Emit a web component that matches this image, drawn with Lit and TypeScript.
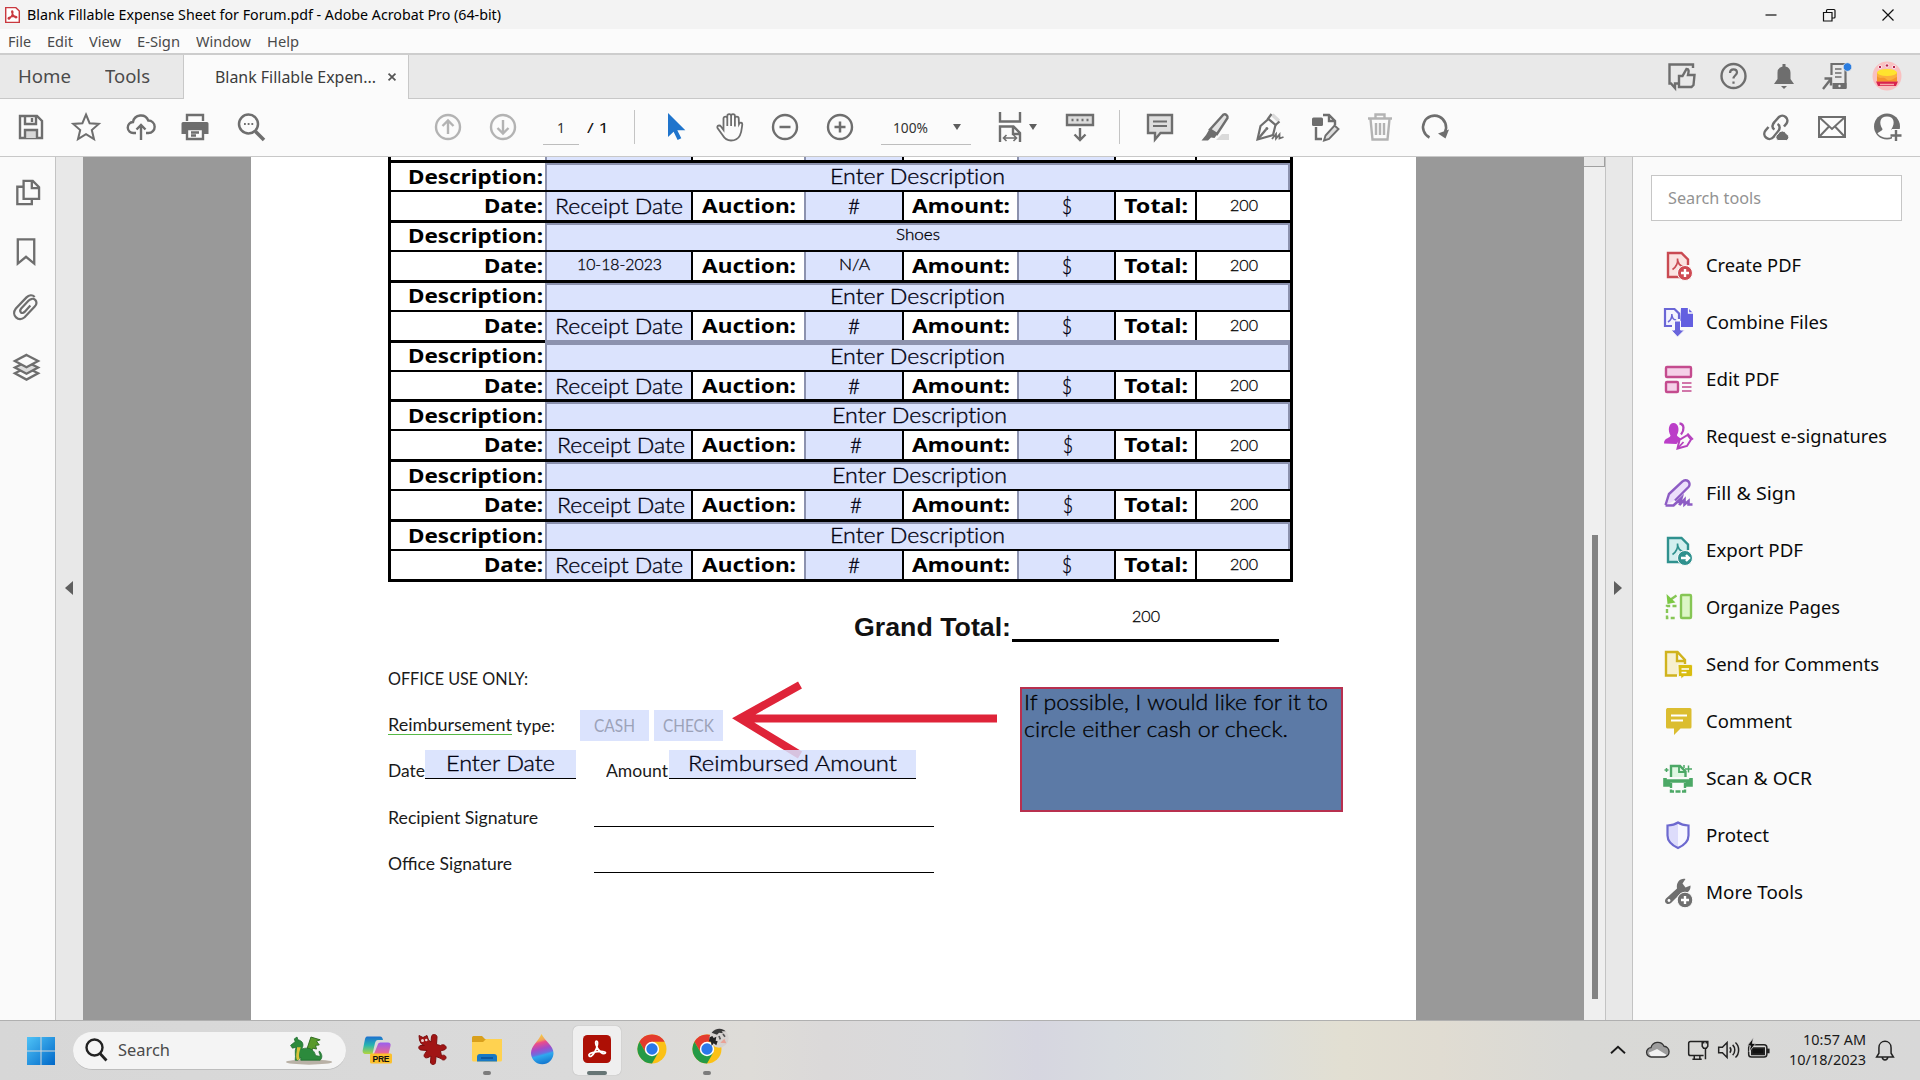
import { LitElement, html, css, svg, nothing } from "lit";
import { customElement, property, query } from "lit/decorators.js";

/** A single line of text condensed or expanded to a fixed measure. */
@customElement("fit-text")
class FitText extends LitElement {
  @property({ type: Number }) w = 0;
  @property() text = "";
  @query("span") span!: HTMLSpanElement;
  static styles = css`
    :host { display: inline-block; flex: none; white-space: nowrap; text-align: left; }
    span { display: inline-block; transform-origin: 0 50%; }
  `;
  render() {
    return html`<span>${this.text}</span>`;
  }
  updated() {
    const natural = this.span.offsetWidth;
    if (!natural) return;
    this.style.width = `${this.w}px`;
    this.span.style.transform = `scaleX(${this.w / this.span.getBoundingClientRect().width})`;
  }
}

const t = (text: string, w: number) => html`<fit-text .text=${text} .w=${w}></fit-text>`;

/* All icons are drawn on a 30 x 30 grid. */
const icons: Record<string, unknown> = {
  save: svg`<path d="M4 4h17l5 5v17H4z"/><path d="M9 4v8h11V4M16 6v4"/><path d="M9 26v-8h12v8" fill="#d8d8d8"/>`,
  star: svg`<path d="M15 2.500l3.600 8.700 9.200.700-7 6.100 2.200 9.200-8-5-8 5 2.200-9.200-7-6.100 9.200-.700z" stroke-width="2"/>`,
  cloudup: svg`<path d="M10 21H7.500a5.500 5.500 0 0 1-.500-11 8 8 0 0 1 15.300-1.500A6.200 6.200 0 0 1 22.500 21H20M15 28V13M10.500 17.500L15 13l4.500 4.500"/>`,
  print: svg`<g transform="translate(-1 0)"><path d="M7 9V3h16v6"/><path d="M3 10h24a1.500 1.500 0 0 1 1.500 1.500V22H24v-5H6v5H1.500V11.500A1.500 1.500 0 0 1 3 10z" fill="#6e6e6e" stroke="none"/><path d="M7 17h16v10H7zM11 20.500h8M11 23.500h5"/></g>`,
  find: svg`<circle cx="12.500" cy="12" r="9.500" stroke-width="2.500"/><path d="M19.500 19.500l8.500 8.500" stroke-width="3.500"/><path d="M8 12h1.800M11.700 12h1.800M15.400 12h1.800" stroke-width="2"/>`,
  up: svg`<circle cx="15" cy="15" r="12"/><path d="M15 22V8.500M9.500 14L15 8.500l5.500 5.500"/>`,
  down: svg`<circle cx="15" cy="15" r="12"/><path d="M15 8v13.500M9.500 16l5.500 5.500 5.500-5.500"/>`,
  cursor: svg`<path d="M8 1v24l5.600-5.200 4 8.200 3.700-1.800-4-8h8z" fill="#1f74cc" stroke="none"/>`,
  hand: svg`<g transform="translate(1 0)"><path d="M7.500 18V6.500a1.900 1.900 0 0 1 3.800 0V14 4a1.900 1.900 0 0 1 3.800 0v10V4a1.900 1.900 0 0 1 3.800 0v10.500V6.500a1.900 1.900 0 0 1 3.800 0L23 12c1-2 3.500-1.500 3.300.5C25.500 17 26 28.500 15 28.500c-4.500 0-6.500-2-8.500-5.500L1.500 16c-1-2.200 2-3.500 3.500-1.500z" stroke-width="1.800"/></g>`,
  minus: svg`<circle cx="15" cy="15" r="12"/><path d="M9.500 15h11" stroke-width="2.500"/>`,
  plus: svg`<circle cx="15" cy="15" r="12"/><path d="M9.500 15h11M15 9.500v11" stroke-width="2.500"/>`,
  fit: svg`<path d="M5 0v9.500h20V0M5 30V14.500h13.500L25 21v9M18 15v7h7"/><path d="M9 26h12M11.500 23L8.500 26l3 3M18.500 23l3 3-3 3" stroke-width="1.600"/>`,
  kbd: svg`<path d="M2 3h26v10H2z" fill="#dcdcdc"/><path d="M6.500 8h2M11.500 8h2M16.500 8h2M21.500 8h2" stroke-width="2.600"/><path d="M15 16v12M9.500 22.500L15 28l5.500-5.500"/>`,
  comment: svg`<path d="M3 3h24v18H15.500L10 27.500V21H3z" fill="#dedede"/><path d="M8 9.500h14M8 14h14" stroke-width="1.800"/>`,
  marker: svg`<path d="M16 28l6-6h7v6z" fill="#dadada" stroke="none"/><path d="M23.500 2.500a3 3 0 0 1 4 3.500L17 22l-7-4.500z" fill="#e2e2e2"/><path d="M9.500 17l8 5-3 4-3.500-.500-3 3H1.500l4.500-5.500z" fill="#6e6e6e" stroke="none"/>`,
  pen: svg`<path d="M13.500 7l7 6-2.500 10L2.500 27.500 5.500 14z" stroke-width="2.200"/><path d="M3 27l8-9.500"/><circle cx="11.800" cy="16.500" r="1.500" fill="#6e6e6e" stroke="none"/><path d="M16 4l7 6.500 2-3L18.500 1.500z" fill="#dadada" stroke="none"/><path d="M12.500 7.500L16.500 2M20 13.500l4.500-4" stroke-width="2.200"/><path d="M17 27l4-5v4.500l3.500-4v4l4-1.500" stroke-width="1.800"/>`,
  editpage: svg`<path d="M13 3h6l6 6v4M19 3v6h6M6 15v12h6"/><rect x="2" y="5.500" width="11" height="8.500" rx="1.500" fill="#6e6e6e" stroke="none"/><path d="M24.500 13.500l4 3.500-9.500 10-5 1.500 1.500-5z" fill="#dedede" stroke-width="1.900"/>`,
  trash: svg`<path d="M3 6.500h24M10.500 6V2.500h9V6M5.500 7l2 20.500h15l2-20.500M11 11v12M15 11v12M19 11v12"/>`,
  rotate: svg`<path d="M9.500 25.500A11.500 11.500 0 1 1 25 20" stroke-width="2.600"/><path d="M29 17.500l-3.500 9-7.500-5z" fill="#6e6e6e" stroke="none"/>`,
  link: svg`<path d="M13.500 17.500c-3-1.500-2.500-5 0-7.500L18 5a5 5 0 0 1 7.500 6.500L23 14.500M16.500 12c3 1.500 2.500 5 .500 7.500L12.500 25a5 5 0 0 1-8-6.500L7.500 15" stroke-width="2.500"/><path d="M17 28.500a3.500 3.500 0 0 1 0-6.500 4.500 4.500 0 0 1 8.500 0 3.400 3.400 0 0 1 0 6.500z" fill="#6e6e6e" stroke="#fafafa" stroke-width="1"/>`,
  mail: svg`<path d="M2 5h26v20H2zM2 5l13 12L28 5M2 25l10-10.500M28 25L18 14.500" stroke-width="2"/>`,
  person: svg`<circle cx="15" cy="14.500" r="13" fill="#6e6e6e" stroke="none"/><path d="M5.500 21.500c1.500-2.300 5-2.300 5-4.500C6.500 11 8 4.500 15 4.500S23.500 11 19.500 17c0 2.200 3.500 2.200 5 4.500C22.500 24 19 25.800 15 25.800s-7.500-1.800-9.500-4.300z" fill="#fbfbfb" stroke="none"/><path d="M20 17h11v13H20z" fill="#fbfbfb" stroke="none"/><path d="M24 18v11M18.500 23.500h11" stroke-width="2.400"/>`,
  thumbs: svg`<g transform="translate(1 0)"><path d="M11 22.500H8v4.500l-4-4.500H2.500v-19H26V7"/><path d="M12 15h3.500l4-7c2.500 0 2.500 2 1.500 6h6.500l-1 10-2 2H12z" stroke-width="2.400"/></g>`,
  help: svg`<circle cx="15.500" cy="15" r="12"/><path d="M12 12c0-5 7-4.500 7-.500 0 2.500-3.500 3-3.500 6M15.500 20.500v2.200" stroke-width="2.200"/>`,
  bell: svg`<path d="M5 23l3.500-5V12a6.500 6.500 0 0 1 5-6.500V3h3v2.500a6.500 6.500 0 0 1 5 6.500v6l3.500 5z" fill="#6e6e6e" stroke="none"/><path d="M12 25h6l-3 3z" fill="#6e6e6e" stroke="none"/>`,
  phone: svg`<g transform="translate(.5 0)"><path d="M10 14V3h14v24" stroke-width="2.200"/><path d="M13.500 8H20M13.500 12H20M13.500 16H20" stroke-width="1.500"/><path d="M11 22h14v6H11z" fill="#6e6e6e" stroke="none"/><circle cx="18" cy="25" r="1.200" fill="#e9e9e9" stroke="none"/><path d="M1.500 28L9 18.500M3 17.500h6.500v7" stroke-width="2.400"/><circle cx="26" cy="6" r="4.300" fill="#2b7de0" stroke="#e9e9e9" stroke-width=".8"/></g>`,
  avatar: svg`<circle cx="15" cy="15" r="14.500" fill="#f9c0c0" stroke="none"/><path d="M5 11.500h20v10H5z" fill="#fbb03c" stroke="none"/><ellipse cx="15" cy="11.500" rx="10" ry="3.500" fill="#ffe32e" stroke="none"/><path d="M5 15c3 4 6 0 9 3s7 0 11-2v4H5z" fill="#f6952c" stroke="none"/><path d="M4 20.500h22l-2 4.500H6z" fill="#d8234f" stroke="none"/><path d="M8 23.500h14" stroke="#f7a7a7" stroke-width="1.500"/><circle cx="8" cy="6" r="1.700" fill="#b8224a" stroke="#fff" stroke-width=".8"/><circle cx="15" cy="4.500" r="1.700" fill="#b8224a" stroke="#fff" stroke-width=".8"/><circle cx="22" cy="6" r="1.700" fill="#b8224a" stroke="#fff" stroke-width=".8"/>`,
  pages: svg`<g transform="translate(2 0)"><path d="M9.500 8.500H3.500v18h15v-5"/><path d="M10 2.500h9.500l6.500 6.500v12H10zM18.500 3v7H26" fill="#fafafa"/></g>`,
  bookmark: svg`<path d="M6 3h17v25l-8.500-7L6 28z" stroke-width="2.400"/>`,
  clip: svg`<g transform="translate(-1 -2)"><path d="M20 13.500l-6 6.500c-3 3-6-.500-3.500-3.500L18 8.500c5-5.500 11.500 1 6.500 6L14 25.500c-6 5.500-14.500-2-9-9L16 5c2.500-2.500 6-3 8.500-.500" stroke-width="2.300"/></g>`,
  layers: svg`<path d="M15 15.500l12 6-12 6.500-12-6.500z"/><path d="M15 9.500l12 6-12 6.500-12-6.500z" fill="#dcdcdc"/><path d="M15 2.500l12 6.300-12 6.400L3 8.800z" fill="#fafafa"/>`,
  create: svg`<g stroke="#c94a52"><path d="M18 27H5V3h13.500L25 9.500V15" fill="#fbe3e1"/><path d="M9.500 19.500c5-3.500 5.500-7 5-11 0 5 3 8 6 8" stroke-width="1.600"/><circle cx="22" cy="23" r="7.500" fill="#cf4a53" stroke="#fafafa" stroke-width="1"/><path d="M22 19v8M18 23h8" stroke="#fff"/></g>`,
  combine: svg`<path d="M18 1h7l5 5v14H17z" fill="#635fe0" stroke="none"/><path d="M25.500 1v5H30" stroke="#fafafa" stroke-width="1.300"/><path d="M9 19H2V2h9.500L16 6.500V12" fill="#f3f3fe" stroke="#6a66d6" stroke-width="2.200"/><path d="M5 15c4-2.500 4-6 3.800-8 .2 4 2.200 6 4.400 6" stroke="#6a66d6" stroke-width="1.500"/><path d="M11.500 14h6v9h4L14.500 30 8 23h3.500z" fill="#6965dc" stroke="#fafafa" stroke-width="1"/>`,
  edit: svg`<g stroke="#c44b8e"><rect x="3" y="3" width="25" height="10" rx="1" fill="#f5d0e8"/><rect x="3" y="18" width="12" height="10" rx="1" fill="#f5d0e8"/><path d="M19 19h9.500M19 23h9.500M19 27h9.500" stroke-width="1.500"/></g>`,
  request: svg`<g stroke="#b541bd"><path d="M16.500 2.500c5 .5 5 7 1.500 11" stroke-width="2.300"/><path d="M1 22.500c0-6 6-5 6.500-8C4.500 9.500 5.500 2 10.500 2s6.500 7 3.500 12c0 2 3 2 3.500 4l-4 5z" fill="#bb3ec8" stroke="none"/><path d="M14.500 27.500l2-8.500 8-5 3.500 4.500-4 6.500z" fill="#fafafa" stroke-width="2"/><path d="M15 27l5.500-6M24.500 12.500l5.500 6" stroke-width="1.800"/></g>`,
  fill: svg`<g stroke="#8d5cc4"><path d="M2.500 27l3.500-11L19.500 3.500a4 4 0 0 1 6 5.500L12 22.500" fill="#ecdffb"/><path d="M2.500 27.500h8l8-7.500-2 7 5-5.500v5l4-3.500v3.500h4" stroke-width="2.600"/></g>`,
  export: svg`<g stroke="#2f918e"><path d="M18 27H5V3h13.500L25 9.500V15" fill="#d3efef"/><path d="M9.500 19.500c5-3.500 5.500-7 5-11 0 5 3 8 6 8" stroke-width="1.600"/><circle cx="22" cy="23" r="7.500" fill="#2f918e" stroke="#fafafa" stroke-width="1"/><path d="M18 23h8M23 20l3 3-3 3" stroke="#fff"/></g>`,
  organize: svg`<g stroke="#86c655"><rect x="18" y="3" width="10" height="23" rx="1" fill="#dcf6c6"/><path d="M13.500 14H4v12h10" stroke-dasharray="4 2.300"/><path d="M13.500 3.500L7 8" stroke-width="2.300"/><path d="M3.500 2l1 10 8-1.500z" fill="#7cc844" stroke="none"/></g>`,
  send: svg`<g stroke="#d0b31d"><path d="M14 26.500H3V3h11.500l7.500 8v4M14 4v8h8" fill="#f7f0cf"/><path d="M15 15.500h13a1.500 1.500 0 0 1 1.500 1.500v9a1.500 1.500 0 0 1-1.500 1.500h-7L18 30v-2.500h-2.500z" fill="#d9bd10" stroke="#fafafa" stroke-width=".8"/><path d="M18.500 20h7.500M18.500 23.500h5" stroke="#fff" stroke-width="1.500"/></g>`,
  note: svg`<path d="M4 2h23a1.500 1.500 0 0 1 1.500 1.500V21a1.500 1.500 0 0 1-1.500 1.500h-9.500L11 29v-6.500H4.500A1.500 1.500 0 0 1 3 21V3.500z" fill="#dbbd30" stroke="none"/><path d="M8 9.500h16M8 14.500h12" stroke="#fff" stroke-width="2"/>`,
  scan: svg`<g stroke="#4ca866"><path d="M8 14V3h9l5.500 5.500V14" fill="#dff7e2"/><path d="M16 3v6h6" stroke-width="1.800"/><path d="M2 15v7h3.500v-4h19v4H28v-7" stroke-width="3.600"/><path d="M8 20v8.500h14V20" stroke-dasharray="5 1.500"/><path d="M25.500 2.500v7M22 6h7M3.500 5v4M1.500 7h4M21 2v3" stroke-width="1.500"/></g>`,
  shield: svg`<path d="M15 2.500c3 2 7 2.800 10.500 3v10c0 6-5 10-10.500 12.500C9.500 25.500 4.500 21.500 4.500 15.500v-10C8 5.300 12 4.500 15 2.500z" fill="#f6f6ff" stroke="none"/><path d="M15 3v25C9.500 25 4.500 21.500 4.500 15.500v-10C8 5.300 12 4.500 15 3z" fill="#dddcfb" stroke="none"/><path d="M15 2.500c3 2 7 2.800 10.500 3v10c0 6-5 10-10.500 12.500C9.500 25.500 4.500 21.500 4.500 15.500v-10C8 5.300 12 4.500 15 2.500z" stroke="#6d69cf" stroke-width="2.200"/>`,
  wrench: svg`<path d="M3 21.500l11-10C13 5.500 17 1 22.500 2L19.500 6.500l3 4 5-2C28 14 23.500 17.500 18 16L8 26c-3.500 3-8-1-5-4.500z" fill="#6f6f6f" stroke="none"/><circle cx="6" cy="23.500" r="1.400" fill="#fff" stroke="none"/><circle cx="22" cy="23" r="7.800" fill="#6f6f6f" stroke="#fafafa" stroke-width="1"/><path d="M22 19v8M18 23h8" stroke="#fff"/>`,
  windows: svg`<defs><linearGradient id="g" x1="0" y1="0" x2="1" y2="1"><stop offset="0" stop-color="#4fc3f7"/><stop offset="1" stop-color="#0067c8"/></linearGradient></defs><path d="M1 1h13.500v13.500H1zM15.500 1H29v13.500H15.500zM1 15.500h13.500V29H1zM15.500 15.500H29V29H15.500z" fill="url(#g)" stroke="none"/>`,
  lens: svg`<g stroke="#222"><circle cx="13.500" cy="12.500" r="8"/><path d="M19 18.500l6.500 7" stroke-width="2.800"/></g>`,
  copilot: svg`<defs><linearGradient id="a" x1="0" y1="0" x2="0" y2="1"><stop offset="0" stop-color="#1c6fd0"/><stop offset=".5" stop-color="#27b5b0"/><stop offset="1" stop-color="#b5d63c"/></linearGradient><linearGradient id="b" x1="0" y1="0" x2="0" y2="1"><stop offset="0" stop-color="#9a5ff0"/><stop offset="1" stop-color="#f06a8c"/></linearGradient></defs><path d="M5 2.500h13c2 0 2.500 1.500 3 3.500h-5c-2 0-2.500 1.500-3 3l-2.500 11H4c-3 0-4-2-3-5L3 5c.500-1.500 1-2.500 2-2.500z" fill="url(#a)" stroke="none"/><path d="M19 8.500h7c2 0 3 1.500 2.500 3.500l-2 8H12l4-10c.500-1 1.500-1.500 3-1.500z" fill="url(#b)" stroke="none"/><rect x="8" y="19.500" width="22" height="10" rx="1.500" fill="#fbc02d" stroke="none"/><text x="19" y="28" font-size="8.500" font-weight="700" text-anchor="middle" textLength="17" fill="#111" stroke="none">PRE</text>`,
  splat: svg`<path d="M2 1.500l4 2 4-2L11.500 6 14 8l.5-5.500c.500-3 5.500-2.500 5.500.5l-.500 7.500 4 1c3-2 6.500.5 5.500 3-1 2-4 1.500-5.500 2.500l1 5c1-1.500 5-1 4.500 2-.5 2.500-4 2.500-5 .5l-5-2-.5 6c-.5 3-5 2.500-5-.5l.5-6-3 1.500c-3.500 1.500-5-2-3-4l2-3-6-.5c-3-.5-3-4.500 0-4.500l3.500 0L4 9.500 2.500 6z" fill="#a11515" stroke="#7c0e0e" stroke-width="1"/><circle cx="5.500" cy="6.500" r="1.500" fill="#e9d6d6" stroke="none"/><circle cx="9.300" cy="6" r="1.300" fill="#e9d6d6" stroke="none"/>`,
  folder: svg`<path d="M0 3.500A1.500 1.500 0 0 1 1.500 2H10l3 3h15.500A1.500 1.500 0 0 1 30 6.500V10H0z" fill="#d9a01c" stroke="none"/><path d="M0 8h11l3-3h16v21a1.500 1.500 0 0 1-1.500 1.500h-27A1.500 1.500 0 0 1 0 26z" fill="#ffd250" stroke="none"/><path d="M5 27.500V23a3 3 0 0 1 3-3h14a3 3 0 0 1 3 3v4.500z" fill="#1979c4" stroke="none"/><path d="M9 24h12" stroke="#0d4f94" stroke-width="1.500"/>`,
  drop: svg`<defs><linearGradient id="d" x1=".3" y1="0" x2=".5" y2="1"><stop offset="0" stop-color="#f7d53b"/><stop offset=".22" stop-color="#f0a45a"/><stop offset=".3" stop-color="#ec4c8b"/><stop offset=".5" stop-color="#a44bc8"/><stop offset=".65" stop-color="#6a6fe0"/><stop offset=".72" stop-color="#2fa9ee"/><stop offset="1" stop-color="#1478d0"/></linearGradient></defs><path d="M14.500 0C18 7 26.500 12 26.500 19a11.200 11.200 0 0 1-22.500 0C4 12 11.500 7 14.500 0z" fill="url(#d)" stroke="none"/>`,
  acrobat: svg`<rect x="1" y="1" width="28" height="28" rx="4.500" fill="#ad0f05" stroke="none"/><path d="M7 21.500c-1.500-2.500 8.500-4.500 14-4 5 .8 1.500 4-2.500.5C14 14 12.500 7 14.500 7s1 6-1.500 10.500-5 6-6 4z" stroke="#fff" stroke-width="1.700"/>`,
  app: svg`<path d="M3 2h18l6 6v20H3z" fill="#fff" stroke="#c9393f" stroke-width="2.500"/><path d="M7.500 21.500c-1.500-2.500 8-4.500 13-4 4 .8 1.500 4-2 .5C14.500 14.500 12.500 8 14.500 8s1 6-1.500 9.500-4.500 6-5.500 4z" stroke="#c9393f" stroke-width="2.600"/>`,
  chrome: svg`<circle cx="15" cy="15" r="14.500" fill="#fbc116" stroke="none"/><path d="M15 7.750h12.600A14.500 14.500 0 0 0 2.440 7.750L8.700 18.600 15 15z" fill="#e33b2e" stroke="none"/><path d="M2.440 7.750A14.500 14.500 0 0 0 15 29.500L21.300 18.600 15 22 8.700 18.600z" fill="#249a46" stroke="none"/><circle cx="15" cy="15" r="7.200" fill="#fff" stroke="none"/><circle cx="15" cy="15" r="5.700" fill="#2a78ea" stroke="none"/>`,
  face: svg`<circle cx="15" cy="15" r="14.500" fill="#d6d2d0" stroke="none"/><path d="M4 7c5-7 16-8 21-2l-6 0 2 3-6-1-3 3-3-1z" fill="#3a3a3a" stroke="none"/><path d="M1 14l4-2 2 3 4-2-1 6 3 1-2 6-4-3-3 4-1-6-3-1z" fill="#222" stroke="none"/><path d="M15 12l2 5M21 9l3 4" stroke="#555" stroke-width="2.500"/><path d="M17 22l6-6 3 7z" fill="#e9a296" stroke="none"/>`,
  dragon: svg`<ellipse cx="26" cy="29" rx="25" ry="2.800" fill="#b9b1a6" stroke="none"/><path d="M24 14l4-12 10 3-4 1.500 3 4-4 .5 1 4-4-1-2 5z" fill="#5a9a2b" stroke="#2c6a1f" stroke-width="1"/><path d="M13 2l1 3c5 1 7 5 4 10 8-3 14 1 15 7l5 1c0-3-2-4-1-6 3 3 4 7 1 10H17v-3l-3 3h-3c1-6-1-9 1-14l-4 1-2-3 5-4-1-3z" fill="#2c8a3c" stroke="#1d6a2c" stroke-width=".8"/><path d="M13 13c0 5-2 9 0 14l3-1c-2-5 0-9 1-13z" fill="#d8c23a" stroke="none"/>`,
  chevron: svg`<path d="M7.500 18.500L15 11.500l7.500 7" stroke="#1a1a1a" stroke-width="2"/>`,
  cloud: svg`<path d="M8 22.500a5 5 0 0 1-.5-10 7.500 7.500 0 0 1 14-1.500 5.800 5.800 0 0 1 .5 11.500z" fill="#9d9d9d" stroke="none"/><path d="M5 18l9-4 10 6-2 2.500H8z" fill="#f2f2f2" stroke="none"/><path d="M8 22.500a5 5 0 0 1-.5-10 7.500 7.500 0 0 1 14-1.500 5.800 5.800 0 0 1 .5 11.500z" stroke="#333" stroke-width="1.400"/>`,
  network: svg`<g stroke="#222" stroke-width="1.600"><path d="M19 6H7a2 2 0 0 0-2 2v11a2 2 0 0 0 2 2h14M11 21v4M17 21v4M9 25h10M23 13v12M19.500 6h6v5l-1.500 2h-3l-1.500-2zM21 5v3M24 5v3"/></g>`,
  speaker: svg`<g stroke="#222" stroke-width="1.600"><path d="M5 12h4l5-5v16l-5-5H5z"/><path d="M17 12c1.500 2 1.500 4 0 6M20 9.500c3 3 3 8 0 11M23 7c4.500 4 4.500 12 0 16"/></g>`,
  battery: svg`<g stroke="#222"><rect x="5" y="9.500" width="19.500" height="13" rx="3" stroke-width="1.600"/><path d="M8.500 13h13v6.500h-13z" fill="#111" stroke-width="2"/><path d="M26 13.500v5" stroke-width="2.800"/><path d="M10 2L3.500 10.500H7L5.500 17l7-9H9z" fill="#111" stroke="#d9d8d8" stroke-width=".8"/></g>`,
  tbell: svg`<path d="M6 22.500h18l-2.500-4v-6c0-9-13-9-13 0v6zM12 23c.5 3.500 5.500 3.500 6 0" stroke="#222" stroke-width="1.600"/>`,
  min: svg`<path d="M10.500 15h11" stroke="#111" stroke-width="1.200"/>`,
  max: svg`<path d="M9.500 12.500h8.500V21H9.500zM12.500 12V10.500a1 1 0 0 1 1-1H20a1 1 0 0 1 1 1V17a1 1 0 0 1-1 1h-1.500" stroke="#111" stroke-width="1.200"/>`,
  close: svg`<path d="M9.500 9.500l11 11M20.500 9.500l-11 11" stroke="#111" stroke-width="1.200"/>`,
  x: svg`<path d="M11 11l8 8M19 11l-8 8" stroke="#555" stroke-width="2"/>`,
};

@customElement("ui-icon")
class UiIcon extends LitElement {
  @property() name = "";
  static styles = css`
    :host { display: block; flex: none; width: 30px; height: 30px; }
    svg { display: block; width: 100%; height: 100%; overflow: visible; fill: none; stroke: #6e6e6e; stroke-width: 2.4; font-family: "Liberation Sans", sans-serif; }
  `;
  render() {
    const wide = this.name === "dragon";
    return html`<svg viewBox=${wide ? "0 0 54 32" : "0 0 30 30"}>${icons[this.name] ?? nothing}</svg>`;
  }
}

const i = (name: string, cls = "") => html`<ui-icon class=${cls} .name=${name}></ui-icon>`;

interface Expense { desc?: string; date?: string; auction?: string; shift?: boolean; soft?: boolean }
const expenses: Expense[] = [
  {},
  { desc: "Shoes", date: "10-18-2023", auction: "N/A" },
  {},
  { soft: true },
  { shift: true },
  { shift: true },
  {},
];

const tools: [string, string, number][] = [
  ["create", "Create PDF", 95],
  ["combine", "Combine Files", 122],
  ["edit", "Edit PDF", 73],
  ["request", "Request e-signatures", 181],
  ["fill", "Fill & Sign", 90],
  ["export", "Export PDF", 97],
  ["organize", "Organize Pages", 134],
  ["send", "Send for Comments", 173],
  ["note", "Comment", 86],
  ["scan", "Scan & OCR", 106],
  ["shield", "Protect", 63],
  ["wrench", "More Tools", 97],
];

@customElement("app-root")
class AppRoot extends LitElement {
  static styles = css`
    :host { display: block; }
    * { box-sizing: border-box; }
    .screen { width: 1920px; height: 1080px; overflow: hidden; display: flex; flex-direction: column; background: #fbfbfb; font-family: "Noto Sans", "Open Sans", sans-serif; color: #111; line-height: 1; font-variant-ligatures: none; }
    .row { display: flex; align-items: center; }
    .grow { flex: 1; }

    .title { height: 29px; background: #f3f3f3; padding-left: 4px; font-size: 15px; color: #000; }
    .title .logo { width: 17px; height: 20px; margin-right: 6px; }
    .winbtns { display: flex; gap: 29px; padding-right: 17px; }
    .menu { height: 26px; padding: 1px 0 0 8px; font-size: 14.500px; color: #4a4a4a; gap: 16px; border-bottom: 2px solid #cdcdcd; background: #fbfbfb; }
    .tabs { height: 44px; background: #e9e9e9; align-items: stretch; }
    .tabs .home { width: 183px; display: flex; align-items: center; padding: 0 0 2px 18px; gap: 34px; font-size: 18px; color: #4b4b4b; border-bottom: 1px solid #c8c8c8; }
    .tab { width: 226px; display: flex; align-items: center; padding-left: 31px; font-size: 16px; color: #3c3c3c; background: #fbfbfb; border: solid #c8c8c8; border-width: 0 1px; }
    .tab ui-icon { width: 26px; height: 26px; margin-left: 3px; }
    .tabs .right { flex: 1; display: flex; align-items: center; justify-content: flex-end; gap: 21.500px; padding: 0 18px 1px 0; border-bottom: 1px solid #c8c8c8; }
    .toolbar { height: 58px; background: #fbfbfb; border-bottom: 1px solid #c8c8c8; padding-left: 15.500px; padding-bottom: 1px; font-size: 15px; }
    .group { display: flex; align-items: center; gap: 25px; }
    .nav { margin-left: 167px; }
    .nav ui-icon, .dim { opacity: .5; }
    .box { height: 35px; display: flex; align-items: center; justify-content: center; border-bottom: 1px solid #bdbdbd; color: #333; padding-top: 1px; }
    .pg { width: 36px; margin-left: 25px; margin-right: 8px; }
    .sep { width: 1px; height: 34px; background: #c4c4c4; }
    .s1 { margin: 0 25px 0 25px; }
    .zoom { width: 90px; margin: 0 24px 0 26px; justify-content: flex-end; gap: 25px; padding-right: 10px; }
    .caret { border: solid transparent; border-width: 6px 4.500px 0; border-top-color: #5e5e5e; }
    .fitcaret { margin: 0 28px 0 4px; }
    .s2 { margin: 0 25px 0 24px; }
    .share { gap: 25.500px; padding-right: 18px; }

    .body { height: 864px; display: flex; border-bottom: 1px solid #b0b0b0; }
    .rail { width: 56px; background: #fafafa; border-right: 1px solid #c3c3c3; display: flex; flex-direction: column; align-items: center; padding: 21px 2px 0 0; gap: 28px; }
    .rail ui-icon { width: 29px; height: 30px; }
    .gutter { width: 27px; background: #e8e8e8; display: flex; align-items: center; justify-content: center; padding: 0 2px 2px 0; }
    .gutter.r { border: solid #c3c3c3; border-width: 0 1px; width: 28px; }
    .tri { border: solid transparent; border-width: 7px 8px 7px 0; border-right-color: #5f5f5f; }
    .tri.out { border-width: 7px 0 7px 8px; border-left-color: #5f5f5f; }
    .canvas { width: 1501px; background: #999; display: flex; }
    .page { width: 1165px; margin-left: 168px; background: #fff; padding-left: 137px; position: relative; }
    .scroll { width: 21px; background: #efefef; display: flex; flex-direction: column; }
    .cap { height: 10px; background: #e8e8e8; border: solid #a0a0a0; border-width: 0 1px 1px 0; }
    .thumb { width: 6px; height: 464px; margin: 368px 0 0 8px; background: #838383; }

    .table { width: 905px; height: 425px; border: solid #000; border-width: 0 3px 3px; font-size: 20px; }
    .table b { font-family: "Noto Sans", sans-serif; font-weight: 700; color: #000; }
    .field { font-family: Lato, sans-serif; font-weight: 300; color: #000010; -webkit-text-stroke: .35px #000010; background: #dbe3fd; border-left: 2px solid #8c92ae; display: flex; align-items: center; justify-content: center; font-size: 21px; }
    .small { font-size: 15.500px; font-family: Lato, sans-serif; font-weight: 300; -webkit-text-stroke: .3px #000; }
    .line { display: grid; grid-template-columns: 154px 1fr; }
    .line.d { grid-template-columns: 154px 146px 113px 98px 115px 97px 81px 1fr; }
    .pair { height: 59.860px; display: flex; flex-direction: column; }
    .pair .rule { height: 3px; background: #000; }
    .soft .rule { background: linear-gradient(90deg, #000 154px, #8c92ae 154px); }
    .desc { height: 27px; }
    .desc .field { border-top: 2px solid #8c92ae; border-right: 2px solid #8c92ae; padding-bottom: 4px; }
    .date { flex: 1; border-top: 2px solid #000; }
    .date .field { padding-bottom: 1px; }
    .stub { height: 3px; }
    .lab { display: flex; align-items: center; justify-content: flex-end; padding-right: 2px; }
    .mid { display: flex; align-items: center; justify-content: center; border-left: 2px solid #000; }
    .field .small { padding-bottom: 1px; }
    .shift .field { padding-left: 3px; }

    .grand { display: flex; margin: 32px 0 0 466px; height: 26px; font: 700 26px/26px "Liberation Sans", sans-serif; width: 425px; }
    .sum { flex: 1; display: flex; justify-content: center; align-items: flex-start; height: 28px; margin-left: 1px; border-bottom: 3px solid #000; font: 300 15.500px/17px Lato, sans-serif; -webkit-text-stroke: .3px #000; }
    .sum fit-text { margin-top: -6px; }
    .office { font: 400 17px/20px Lato, sans-serif; color: #1a1a1a; padding-top: 29px; }
    .orow { display: flex; align-items: center; }
    .reim { height: 31px; margin-top: 21px; }
    .gr { border-bottom: 1px solid #57b947; height: 19px; line-height: 18px; }
    .chip { width: 69px; height: 31px; background: #dbe3fd; color: #9ca2b8; display: flex; align-items: center; justify-content: center; font-size: 17px; margin-right: 5px; }
    .c1 { margin-left: 25px; }
    .dates { height: 29px; margin-top: 9px; align-items: flex-end; position: relative; z-index: 2; }
    .dates .lbl { height: 18px; line-height: 20px; }
    .ent { height: 29px; display: flex; align-items: center; justify-content: center; background: rgba(214, 223, 253, .85); border-bottom: 1px solid #000; color: #000010; font-size: 21px; font-weight: 300; -webkit-text-stroke: .35px #000010; padding-bottom: 2px; }
    .e1 { width: 151px; margin-right: 30px; }
    .e2 { width: 247px; margin-left: 1px; }
    .sig { height: 20px; margin-top: 29px; }
    .sig.two { margin-top: 26px; }
    .sig i { width: 340px; height: 1px; background: #000; align-self: flex-end; margin-bottom: 1px; }
    .sig .g1 { margin-left: 56px; }
    .sig .g2 { margin-left: 82px; }
    .arrow { position: absolute; left: 479px; top: 520px; width: 270px; height: 84px; fill: none; stroke: #df2439; stroke-width: 8; z-index: 1; }
    .callout { position: absolute; left: 769px; top: 530px; width: 323px; height: 125px; background: #5c7aa6; border: 2px solid #b8304f; padding: 0 0 0 2px; font: 300 21px/27px Lato, sans-serif; color: #000; -webkit-text-stroke: .3px #000; display: flex; flex-direction: column; }
    .callout fit-text { height: 27px; margin-top: -1px; margin-bottom: 1px; }

    .panel { flex: 1; background: #fafafa; padding: 18px 18px 0; }
    .search { height: 46px; background: #fff; border: 1px solid #c6c6c6; display: flex; align-items: center; padding: 0 0 1px 16px; font-size: 16px; color: #929292; }
    .tool { height: 57px; display: flex; align-items: center; gap: 13px; font-size: 18px; color: #0a0a0a; padding-left: 12px; }
    .list { padding-top: 15px; }

    .task { height: 59px; background: linear-gradient(90deg, #d7d7d7 0, #dadada 30%, #dedcd8 39%, #dbd9d9 43%, #d9dadd 50%, #d6d6e0 54%, #d8dbe0 58%, #dcdedd 64%, #e2dfd2 70%, #e0dcd2 75%, #d9d9d6 82%, #d8d8d8 100%); padding-left: 26px; }
    .task .win { width: 30px; height: 30px; }
    .pill { width: 273px; height: 38px; margin-left: 17px; border-radius: 19px; background: #f4f4f4; border-bottom: 1px solid #bdbdbd; display: flex; align-items: center; padding: 0 11px 0 8px; gap: 7px; font-size: 16px; color: #4a4a4a; }
    .pill .dragon { width: 50px; height: 32px; margin-left: auto; }
    .apps { display: flex; margin-left: 7px; }
    .slot { width: 48px; height: 49px; margin-right: 7px; border-radius: 5px; position: relative; display: flex; align-items: center; justify-content: center; padding-bottom: 3px; }
    .slot.on { background: #efefef; box-shadow: 0 0 1px #999; }
    .slot .mark { position: absolute; bottom: 0; left: 20px; width: 8px; height: 4px; border-radius: 2px; background: #7c7c7c; }
    .slot.on .mark { left: 14px; width: 20px; background: #667575; }
    .slot .badge { position: absolute; width: 20px; height: 20px; left: 26px; top: 2px; }
    .tray { display: flex; align-items: center; font-size: 14.500px; color: #1a1a1a; padding: 0 21px 2px 0; }
    .tray ui-icon { width: 28px; height: 28px; }
    .clock { display: flex; flex-direction: column; align-items: flex-end; gap: 5px; margin: 0 5px 1px 17px; }
    .cl { margin: 0 12px; }
    .sp { margin: 0 2px; }
  `;

  private pair(e: Expense) {
    const val = (v: string | undefined, w: number, d: string, dw: number) =>
      v ? html`<span class="small">${t(v, w)}</span>` : t(d, dw);
    return html`<div class="pair ${e.shift ? "shift" : ""} ${e.soft ? "soft" : ""}">
      <div class="rule"></div>
      <div class="line desc">
        <div class="lab"><b>${t("Description:", 135)}</b></div>
        <div class="field">${val(e.desc, 44, "Enter Description", 175)}</div>
      </div>
      <div class="line d date">
        <div class="lab"><b>${t("Date:", 59)}</b></div>
        <div class="field">${val(e.date, 85, "Receipt Date", 128)}</div>
        <div class="mid"><b>${t("Auction:", 94)}</b></div>
        <div class="field">${val(e.auction, 31, "#", 12)}</div>
        <div class="mid"><b>${t("Amount:", 98)}</b></div>
        <div class="field">${t("$", 10)}</div>
        <div class="mid"><b>${t("Total:", 64)}</b></div>
        <div class="mid small">${t("200", 28)}</div>
      </div>
    </div>`;
  }

  render() {
    return html`<div class="screen">
      <div class="row title">
        ${i("app", "logo")}${t("Blank Fillable Expense Sheet for Forum.pdf - Adobe Acrobat Pro (64-bit)", 474)}
        <div class="grow"></div>
        <div class="winbtns">${i("min")}${i("max")}${i("close")}</div>
      </div>
      <div class="row menu">
        ${t("File", 23)}${t("Edit", 26)}${t("View", 32)}${t("E-Sign", 43)}${t("Window", 55)}${t("Help", 32)}
      </div>
      <div class="row tabs">
        <div class="home">${t("Home", 53)}${t("Tools", 45)}</div>
        <div class="tab">${t("Blank Fillable Expen...", 161)}${i("x")}</div>
        <div class="right">${i("thumbs")}${i("help")}${i("bell")}${i("phone")}${i("avatar")}</div>
      </div>
      <div class="row toolbar">
        <div class="group">${i("save")}${i("star")}${i("cloudup")}${i("print")}${i("find")}</div>
        <div class="group nav">${i("up")}${i("down")}</div>
        <div class="box pg">${t("1", 8)}</div>
        ${t("/  1", 22)}
        <div class="sep s1"></div>
        <div class="group">${i("cursor")}${i("hand")}${i("minus")}${i("plus")}</div>
        <div class="box zoom">${t("100%", 35)}<span class="caret"></span></div>
        ${i("fit")}<span class="caret fitcaret"></span>${i("kbd")}
        <div class="sep s2"></div>
        <div class="group">${i("comment")}${i("marker")}${i("pen")}${i("editpage")}${i("trash", "dim")}${i("rotate")}</div>
        <div class="grow"></div>
        <div class="group share">${i("link")}${i("mail")}${i("person")}</div>
      </div>
      <div class="body">
        <div class="rail">${i("pages")}${i("bookmark")}${i("clip")}${i("layers")}</div>
        <div class="gutter"><span class="tri"></span></div>
        <div class="canvas">
          <div class="page">
            <div class="table">
              <div class="line d stub">
                <div></div><div class="field"></div><div class="mid"></div><div class="field"></div>
                <div class="mid"></div><div class="field"></div><div class="mid"></div><div class="mid"></div>
              </div>
              ${expenses.map((e) => this.pair(e))}
            </div>
            <div class="grand">${t("Grand Total:", 157)}<div class="sum">${t("200", 28)}</div></div>
            <div class="office">
              <div class="orow">${t("OFFICE USE ONLY:", 140)}</div>
              <div class="orow reim">
                <span class="gr">${t("Reimbursement", 124)}</span>&nbsp;${t("type:", 39)}
                <div class="chip c1">${t("CASH", 41)}</div><div class="chip">${t("CHECK", 51)}</div>
              </div>
              <div class="orow dates">
                <span class="lbl">${t("Date", 37)}</span><div class="ent e1">${t("Enter Date", 109)}</div>
                <span class="lbl">${t("Amount", 62)}</span><div class="ent e2">${t("Reimbursed Amount", 209)}</div>
              </div>
              <div class="orow sig">${t("Recipient Signature", 150)}<i class="g1"></i></div>
              <div class="orow sig two">${t("Office Signature", 124)}<i class="g2"></i></div>
            </div>
            <svg class="arrow" viewBox="0 0 270 84"><path d="M267 41.500H10M70 8L10 41.500L70 78"/></svg>
            <div class="callout">${t("If possible, I would like for it to", 304)}${t("circle either cash or check.", 264)}</div>
          </div>
        </div>
        <div class="scroll"><div class="cap"></div><div class="thumb"></div></div>
        <div class="gutter r"><span class="tri out"></span></div>
        <div class="panel">
          <div class="search">${t("Search tools", 93)}</div>
          <div class="list">${tools.map(([n, l, w]) => html`<div class="tool">${i(n)}${t(l, w)}</div>`)}</div>
        </div>
      </div>
      <div class="row task">
        ${i("windows", "win")}
        <div class="pill">${i("lens")}${t("Search", 52)}${i("dragon", "dragon")}</div>
        <div class="apps">
          <div class="slot">${i("copilot")}</div>
          <div class="slot">${i("splat")}</div>
          <div class="slot">${i("folder")}<span class="mark"></span></div>
          <div class="slot">${i("drop")}</div>
          <div class="slot on">${i("acrobat")}<span class="mark"></span></div>
          <div class="slot">${i("chrome")}</div>
          <div class="slot">${i("chrome")}${i("face", "badge")}<span class="mark"></span></div>
        </div>
        <div class="grow"></div>
        <div class="tray">
          ${i("chevron")}${i("cloud", "cl")}${i("network")}${i("speaker", "sp")}${i("battery")}
          <div class="clock">${t("10:57 AM", 63)}${t("10/18/2023", 77)}</div>
          ${i("tbell")}
        </div>
      </div>
    </div>`;
  }
}
